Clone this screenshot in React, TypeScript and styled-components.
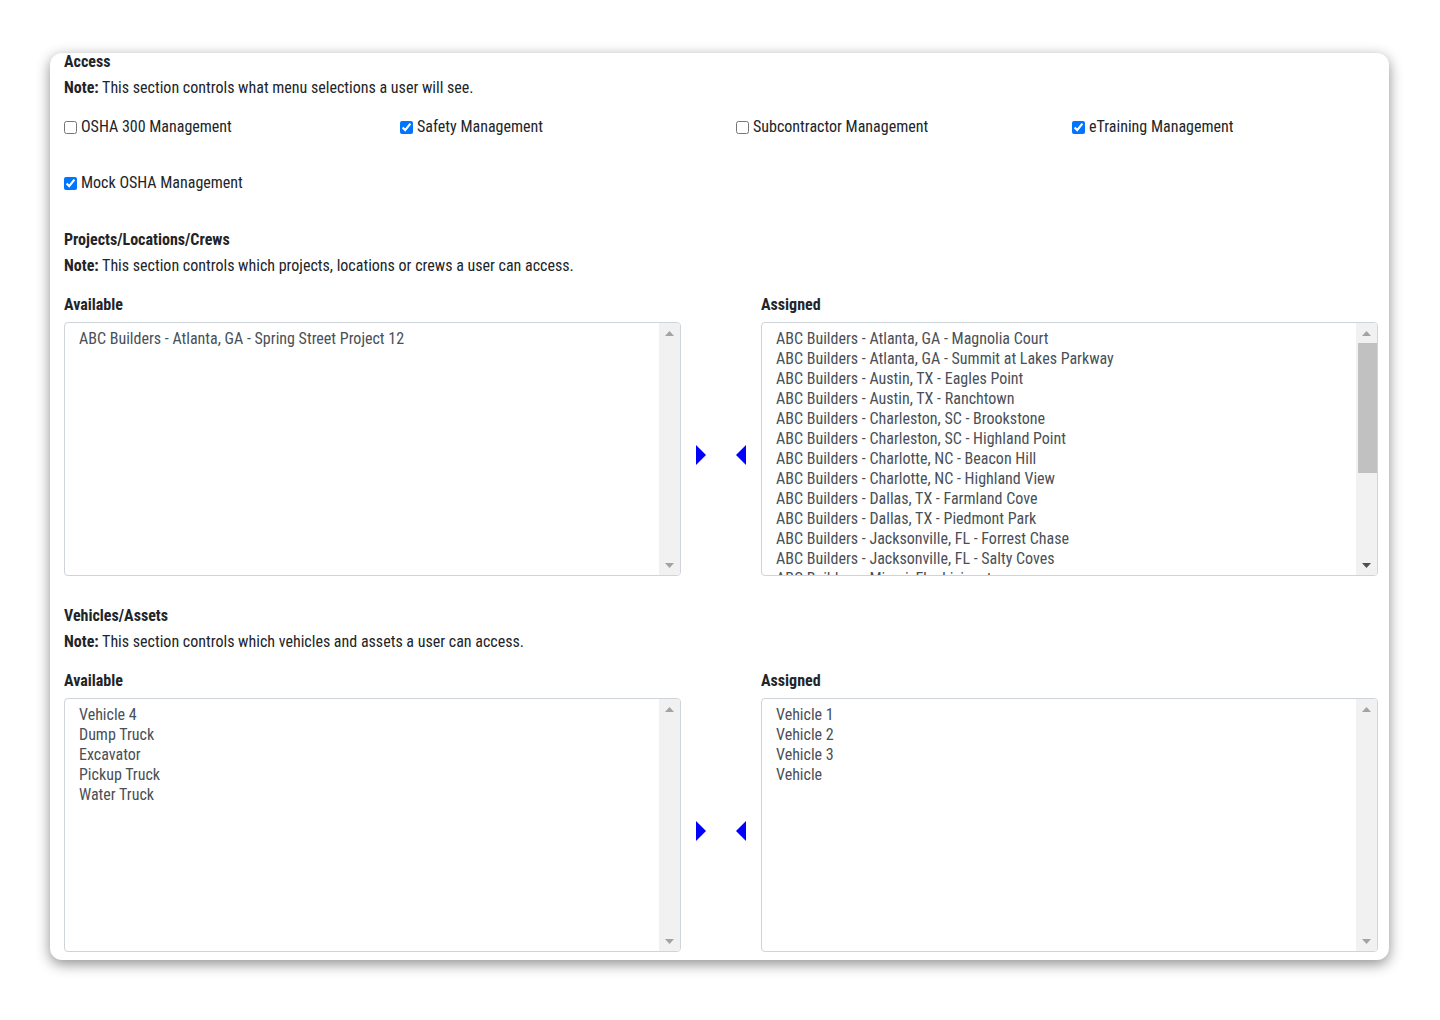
import React from "react";
import styled, { createGlobalStyle } from "styled-components";

const GlobalStyle = createGlobalStyle`
  html, body {
    margin: 0;
    padding: 0;
    background: #ffffff;
  }
  body {
    font-family: "Roboto Condensed", "Liberation Sans Narrow", Roboto, sans-serif;
    font-stretch: condensed;
    font-size: 16px;
    color: #212529;
  }
`;

const LIST_HEIGHT = 254;
const ROW = 20;
const BTN = 20;

const Page = styled.div`
  padding: 53px 51px 60px 50px;
`;

const Card = styled.div`
  background: #fff;
  border-radius: 12px;
  box-shadow: 0 4px 14px rgba(0, 0, 0, 0.45);
  padding: 0 11px 8px 14px;
`;

const Heading = styled.div<{ $first?: boolean; $gap?: number }>`
  font-weight: 700;
  line-height: ${(p) => (p.$first ? "14px" : "24px")};
  padding-top: 2px;
  margin-top: ${(p) => (p.$first ? 0 : p.$gap ?? 26)}px;
`;

const Note = styled.div<{ $gap?: number }>`
  line-height: 24px;
  padding-top: 2px;
  margin-top: ${(p) => p.$gap ?? 0}px;
  b {
    font-weight: 700;
  }
`;

const CheckGrid = styled.div`
  display: grid;
  grid-template-columns: repeat(4, 336px);
  row-gap: 30px;
  margin-top: 13px;
`;

const CheckLabel = styled.label`
  display: flex;
  align-items: center;
  line-height: 24px;
  padding-top: 2px;
  input {
    margin: 0 4px 0 0;
    width: 13px;
    height: 13px;
  }
`;

const TransferRow = styled.div`
  display: grid;
  grid-template-columns: 617px 80px 617px;
`;

const ColLabel = styled.div`
  font-weight: 700;
  line-height: 24px;
  padding-top: 2px;
  margin: 13px 0 5px;
`;

const ListFrame = styled.div`
  display: flex;
  height: ${LIST_HEIGHT}px;
  box-sizing: border-box;
  border: 1px solid #ced4da;
  border-radius: 4px;
  overflow: hidden;
`;

const ListContent = styled.div`
  flex: 1;
  overflow: hidden;
  padding: 6px 14px 4px;
  color: #495057;
`;

const ListItem = styled.div`
  line-height: ${ROW}px;
  white-space: nowrap;
`;

const Scrollbar = styled.div`
  width: 21px;
  flex: none;
  display: flex;
  flex-direction: column;
  background: #f1f1f1;
`;

const ScrollButton = styled.div`
  height: ${BTN}px;
  flex: none;
  display: flex;
  align-items: center;
  justify-content: center;
`;

const ScrollTrack = styled.div`
  flex: 1;
  display: flex;
  flex-direction: column;
`;

const ScrollThumb = styled.div`
  margin-left: 2px;
  background: #c1c1c1;
`;

const ScrollArrow = ({ dir, active }: { dir: "up" | "down"; active: boolean }) => (
  <svg width="9" height="5" viewBox="0 0 9 5">
    <polygon
      points={dir === "up" ? "0,5 4.5,0 9,5" : "0,0 9,0 4.5,5"}
      fill={active ? "#505050" : "#a3a3a3"}
    />
  </svg>
);

const Arrows = styled.div`
  display: flex;
  justify-content: center;
  align-items: center;
  gap: 30px;
  padding-top: 56px;
`;

const Arrow = ({ dir }: { dir: "left" | "right" }) => (
  <svg width="10" height="20" viewBox="0 0 10 20">
    {dir === "right" ? (
      <polygon points="0,0 10,10 0,20" fill="#0000ff" />
    ) : (
      <polygon points="10,0 0,10 10,20" fill="#0000ff" />
    )}
  </svg>
);

const accessItems = [
  { label: "OSHA 300 Management", checked: false },
  { label: "Safety Management", checked: true },
  { label: "Subcontractor Management", checked: false },
  { label: "eTraining Management", checked: true },
  { label: "Mock OSHA Management", checked: true },
];

const projectsAvailable = ["ABC Builders - Atlanta, GA - Spring Street Project 12"];

const projectsAssigned = [
  "ABC Builders - Atlanta, GA - Magnolia Court",
  "ABC Builders - Atlanta, GA - Summit at Lakes Parkway",
  "ABC Builders - Austin, TX - Eagles Point",
  "ABC Builders - Austin, TX - Ranchtown",
  "ABC Builders - Charleston, SC - Brookstone",
  "ABC Builders - Charleston, SC - Highland Point",
  "ABC Builders - Charlotte, NC - Beacon Hill",
  "ABC Builders - Charlotte, NC - Highland View",
  "ABC Builders - Dallas, TX - Farmland Cove",
  "ABC Builders - Dallas, TX - Piedmont Park",
  "ABC Builders - Jacksonville, FL - Forrest Chase",
  "ABC Builders - Jacksonville, FL - Salty Coves",
  "ABC Builders - Miami, FL - Livingston",
  "ABC Builders - Miami, FL - Ocean Ridge",
  "ABC Builders - Nashville, TN - Belle Meade",
  "ABC Builders - Orlando, FL - Lake Nona",
  "ABC Builders - Raleigh, NC - Oak Grove",
  "ABC Builders - Savannah, GA - River Street",
  "ABC Builders - Tampa, FL - Harbor Island",
  "ABC Builders - Tampa, FL - Westshore",
];

const vehiclesAvailable = ["Vehicle 4", "Dump Truck", "Excavator", "Pickup Truck", "Water Truck"];
const vehiclesAssigned = ["Vehicle 1", "Vehicle 2", "Vehicle 3", "Vehicle"];

function ListBox({ items }: { items: string[] }) {
  const inner = LIST_HEIGHT - 2;
  const contentHeight = items.length * ROW + 10;
  const overflows = contentHeight > inner;
  const track = inner - BTN * 2;
  const thumb = overflows ? Math.round((track * inner) / contentHeight) : 0;
  return (
    <ListFrame>
      <ListContent>
        {items.map((a) => (
          <ListItem key={a}>{a}</ListItem>
        ))}
      </ListContent>
      <Scrollbar>
        <ScrollButton>
          <ScrollArrow dir="up" active={false} />
        </ScrollButton>
        <ScrollTrack>{overflows && <ScrollThumb style={{ height: thumb }} />}</ScrollTrack>
        <ScrollButton>
          <ScrollArrow dir="down" active={overflows} />
        </ScrollButton>
      </Scrollbar>
    </ListFrame>
  );
}

function Transfer({ available, assigned }: { available: string[]; assigned: string[] }) {
  return (
    <TransferRow>
      <div>
        <ColLabel>Available</ColLabel>
        <ListBox items={available} />
      </div>
      <Arrows>
        <Arrow dir="right" />
        <Arrow dir="left" />
      </Arrows>
      <div>
        <ColLabel>Assigned</ColLabel>
        <ListBox items={assigned} />
      </div>
    </TransferRow>
  );
}

export default function App() {
  return (
    <Page>
      <GlobalStyle />
      <Card>
        <Heading $first>Access</Heading>
        <Note $gap={5}>
          <b>Note:</b> This section controls what menu selections a user will see.
        </Note>
        <CheckGrid>
          {accessItems.map((c) => (
            <CheckLabel key={c.label}>
              <input type="checkbox" defaultChecked={c.checked} />
              {c.label}
            </CheckLabel>
          ))}
        </CheckGrid>

        <Heading $gap={31}>Projects/Locations/Crews</Heading>
        <Note>
          <b>Note:</b> This section controls which projects, locations or crews a user can access.
        </Note>
        <Transfer available={projectsAvailable} assigned={projectsAssigned} />

        <Heading>Vehicles/Assets</Heading>
        <Note>
          <b>Note:</b> This section controls which vehicles and assets a user can access.
        </Note>
        <Transfer available={vehiclesAvailable} assigned={vehiclesAssigned} />
      </Card>
    </Page>
  );
}
